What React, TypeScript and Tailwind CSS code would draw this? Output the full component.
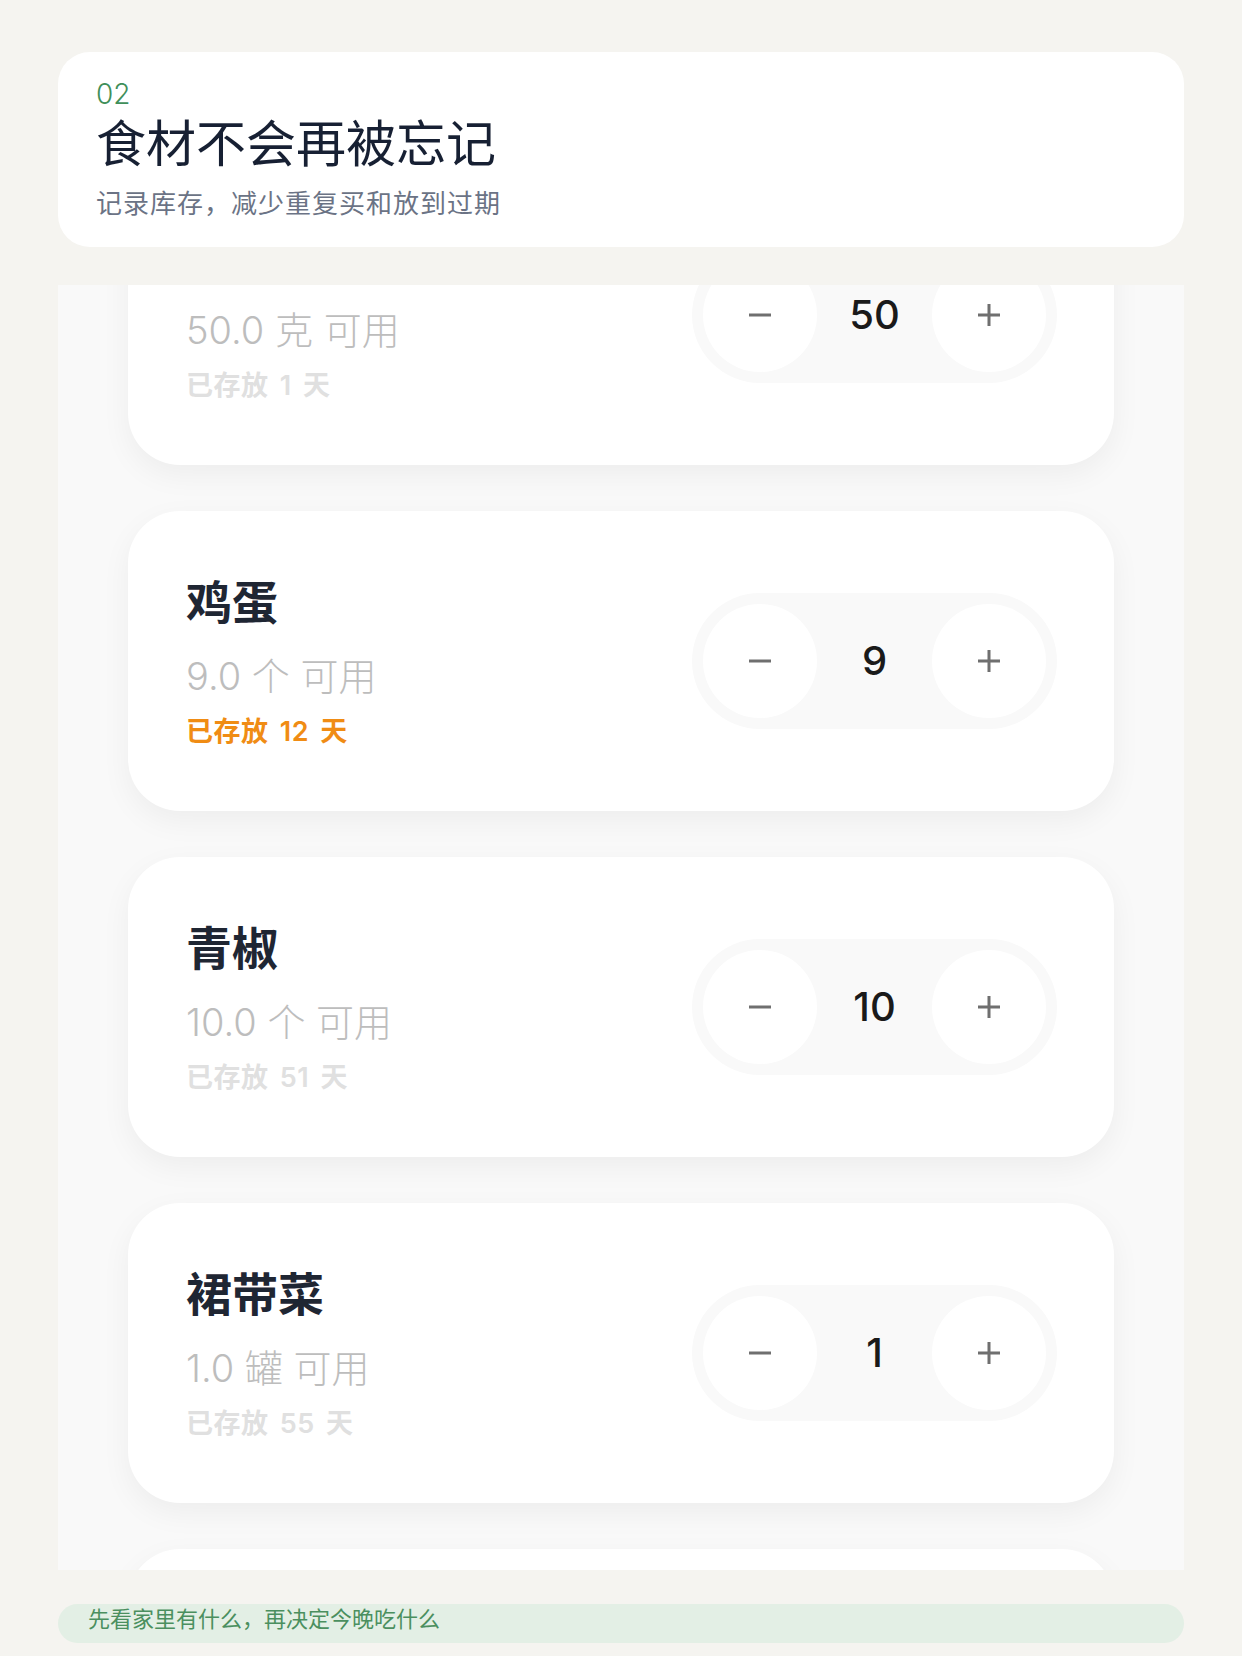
import React from 'react';

const font = "font-['Inter','Noto_Sans_CJK_SC',sans-serif]";

type Item = { name: string; qty: string; days: number; count: string; warn?: boolean };

const items: Item[] = [
  { name: '猪肉', qty: '50.0 克 可用', days: 1, count: '50' },
  { name: '鸡蛋', qty: '9.0 个 可用', days: 12, count: '9', warn: true },
  { name: '青椒', qty: '10.0 个 可用', days: 51, count: '10' },
  { name: '裙带菜', qty: '1.0 罐 可用', days: 55, count: '1' },
  { name: '牛奶', qty: '2.0 盒 可用', days: 3, count: '2' },
];

function MinusIcon() {
  return (
    <svg width="24" height="24" viewBox="0 0 24 24" fill="none">
      <path d="M1 12h22" stroke="#6f6f6f" strokeWidth="3" />
    </svg>
  );
}

function PlusIcon() {
  return (
    <svg width="24" height="24" viewBox="0 0 24 24" fill="none">
      <path d="M1 12h22M12 1v22" stroke="#6f6f6f" strokeWidth="3" />
    </svg>
  );
}

function Stepper({ count }: { count: string }) {
  return (
    <div className="flex items-center rounded-full bg-[#f9f9f9] p-[11px]">
      <button className="flex h-[114px] w-[114px] items-center justify-center rounded-full bg-white">
        <MinusIcon />
      </button>
      <div className="w-[115px] text-center text-[40px] font-medium leading-none text-[#1a1a1a]">{count}</div>
      <button className="flex h-[114px] w-[114px] items-center justify-center rounded-full bg-white">
        <PlusIcon />
      </button>
    </div>
  );
}

function ItemCard({ item }: { item: Item }) {
  return (
    <div className="flex h-[300px] shrink-0 items-center justify-between rounded-[52px] bg-white pl-[58px] pr-[57px] shadow-[0_10px_30px_rgba(0,0,0,0.05)]">
      <div className="flex flex-col">
        <div className="text-[46px] font-bold leading-[60px] text-[#1f2633]">{item.name}</div>
        <div className="mt-[18px] text-[38px] font-light leading-[52px] text-[#bdbdbd]">{item.qty}</div>
        <div
          className={
            'mt-[12px] text-[27px] font-semibold leading-[36px] tracking-[0.5px] [word-spacing:4px] ' +
            (item.warn ? 'text-[#f08c14]' : 'text-[#e0e0e0]')
          }
        >
          已存放 {item.days} 天
        </div>
      </div>
      <Stepper count={item.count} />
    </div>
  );
}

export default function App() {
  return (
    <div className={`min-h-[1656px] bg-[#f5f4f0] px-[58px] pt-[52px] ${font}`}>
      <div className="rounded-[32px] bg-white pl-[38px] pt-[26px] pb-[25px]">
        <div className="text-[28px] font-light leading-[32px] text-[#3f8f5a]">02</div>
        <h1 className="mt-[4px] text-[50px] font-normal leading-[60px] text-[#172033]">食材不会再被忘记</h1>
        <p className="mt-[12px] text-[26px] leading-[36px] tracking-[1px] text-[#6b7385]">记录库存，减少重复买和放到过期</p>
      </div>

      <div className="mt-[38px] h-[1285px] overflow-hidden bg-[#f9f9f9]">
        <div className="-mt-[120px] flex flex-col gap-[46px] px-[70px]">
          {items.map((item) => (
            <ItemCard key={item.name} item={item} />
          ))}
        </div>
      </div>

      <div className="mt-[34px] flex h-[39px] items-center rounded-full bg-[#e3efe5] px-[30px] pb-[9px]">
        <span className="text-[22px] leading-none text-[#4b8f5f]">先看家里有什么，再决定今晚吃什么</span>
      </div>
    </div>
  );
}
